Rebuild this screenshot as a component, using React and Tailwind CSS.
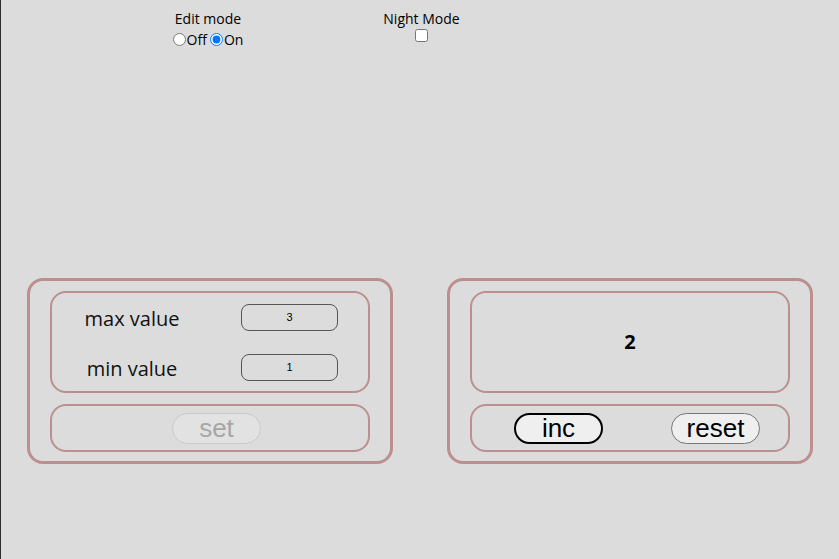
const Panel = ({ children }) => (
  <div className="w-[366px] h-[186px] border-[3px] border-[#bc8f8f] rounded-[16px] px-[20px] pt-[10px] pb-[9px] flex flex-col gap-[11px]">
    {children}
  </div>
);

const Box = ({ className = "", children }) => (
  <div className={`border-2 border-[#bc8f8f] rounded-[16px] ${className}`}>{children}</div>
);

const ValueRow = ({ label, value }) => (
  <div className="flex items-center pl-[29px] pr-[30px]">
    <span className="w-[102px] pt-[3px] text-center text-[20px] text-[#111] leading-none">{label}</span>
    <input
      type="number"
      value={value}
      readOnly
      className="ml-auto w-[97px] h-[27px] border border-[#555] rounded-[8px] bg-transparent text-center text-[11px] text-black outline-none [font-family:'Liberation_Sans',Arial,sans-serif] [appearance:textfield] [&::-webkit-inner-spin-button]:appearance-none"
    />
  </div>
);

export default function App() {
  return (
    <div className="min-h-screen bg-[#dcdcdc] border-l border-[#2b2b2b] [font-family:'Open_Sans',sans-serif] text-black">
      {/* Top controls */}
      <div className="h-[50px] pt-[10px] pl-[171px] flex text-[14px]">
        <div className="w-[72px] flex flex-col items-center">
          <span className="leading-[18px]">Edit mode</span>
          <div className="flex items-center h-[24px]">
            <input type="radio" name="mode" className="m-0 w-[13px] h-[13px]" />
            <span className="ml-[1px] mr-[3px]">Off</span>
            <input type="radio" name="mode" defaultChecked className="m-0 w-[13px] h-[13px]" />
            <span className="ml-[1px]">On</span>
          </div>
        </div>
        <div className="ml-[139px] w-[77px] flex flex-col items-center">
          <span className="leading-[18px]">Night Mode</span>
          <div className="flex items-center h-[14px]">
            <input type="checkbox" className="m-0 w-[13px] h-[13px]" />
          </div>
        </div>
      </div>

      {/* Counter panels */}
      <div className="mt-[228px] flex justify-center gap-[54px]">
        <Panel>
          <Box className="h-[102px] flex flex-col justify-center gap-[23px]">
            <ValueRow label="max value" value={3} />
            <ValueRow label="min value" value={1} />
          </Box>
          <Box className="h-[48px] flex items-center pl-[120px]">
            <button
              disabled
              className="w-[89px] h-[31px] rounded-full border border-[#c9c9c9] bg-[#e2e2e2] text-[#a6a6a6] text-[26px] leading-none flex items-center justify-center [font-family:'Liberation_Sans',Arial,sans-serif]"
            >
              set
            </button>
          </Box>
        </Panel>

        <Panel>
          <Box className="h-[102px] flex items-center justify-center">
            <span className="text-[20px] font-bold">2</span>
          </Box>
          <Box className="h-[48px] flex items-center pl-[42px] gap-[68px]">
            <button className="w-[89px] h-[31px] rounded-full border-2 border-black bg-[#efefef] text-[26px] leading-none flex items-center justify-center [font-family:'Liberation_Sans',Arial,sans-serif]">
              inc
            </button>
            <button className="w-[89px] h-[31px] rounded-full border border-[#767676] bg-[#efefef] text-[26px] leading-none flex items-center justify-center [font-family:'Liberation_Sans',Arial,sans-serif]">
              reset
            </button>
          </Box>
        </Panel>
      </div>
    </div>
  );
}
